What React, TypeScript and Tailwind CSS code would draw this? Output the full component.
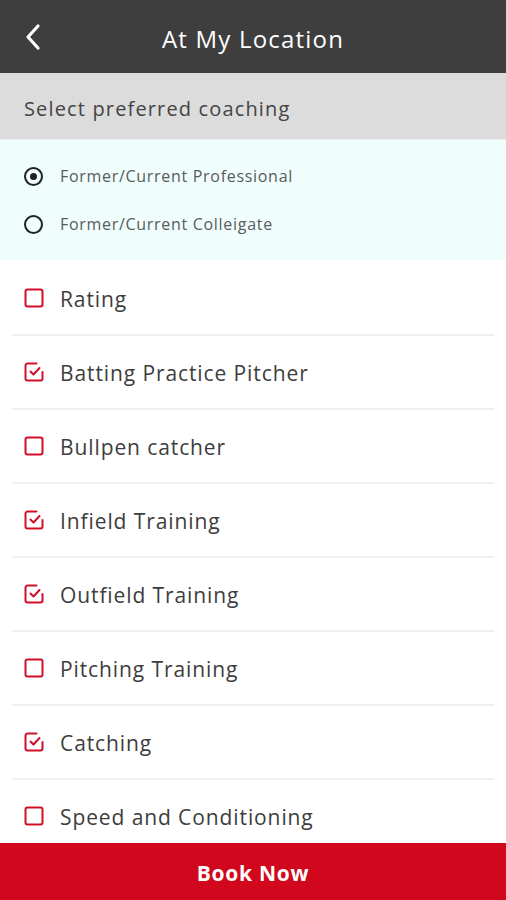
import { useState } from 'react';

const items = [
  { label: 'Rating', checked: false },
  { label: 'Batting Practice Pitcher', checked: true },
  { label: 'Bullpen catcher', checked: false },
  { label: 'Infield Training', checked: true },
  { label: 'Outfield Training', checked: true },
  { label: 'Pitching Training', checked: false },
  { label: 'Catching', checked: true },
  { label: 'Speed and Conditioning', checked: false },
];

function CheckIcon({ checked }: { checked: boolean }) {
  if (!checked) {
    return (
      <svg width="20" height="20" viewBox="0 0 20 20" className="shrink-0">
        <rect x="1.5" y="1.5" width="17" height="17" rx="2" fill="none" stroke="#d0102a" strokeWidth="2" />
      </svg>
    );
  }
  return (
    <svg width="20" height="20" viewBox="0 0 20 20" className="shrink-0">
      <path d="M18.5 10v6.5a2 2 0 0 1-2 2h-13a2 2 0 0 1-2-2v-13a2 2 0 0 1 2-2h9" fill="none" stroke="#d0102a" strokeWidth="2" strokeLinecap="round" />
      <path d="M6.5 9.5l3 3 6-6.5" fill="none" stroke="#d0102a" strokeWidth="2" strokeLinecap="round" strokeLinejoin="round" />
    </svg>
  );
}

export default function App() {
  const [coaching, setCoaching] = useState('pro');
  const [list, setList] = useState(items);

  return (
    <div className="w-[506px] h-[900px] flex flex-col bg-white overflow-hidden" style={{ fontFamily: '"Open Sans", Lato, sans-serif' }}>
      {/* header */}
      <div className="h-[73px] shrink-0 bg-[#3f3e3e] flex items-center relative">
        <svg width="22" height="30" viewBox="0 0 22 30" className="absolute left-[22px] top-[22px]">
          <path d="M16 4L6 15l10 11" fill="none" stroke="white" strokeWidth="3.2" strokeLinecap="round" strokeLinejoin="round" />
        </svg>
        <h1 className="w-full text-center text-white text-[24px] font-medium tracking-[1.2px] pt-1">At My Location</h1>
      </div>

      <div className="h-[67px] shrink-0 bg-[#dcdcdc] flex items-center px-6 pt-[5px] text-[20px] text-[#444] tracking-[1.15px] border-b border-[#e6eeee]">
        Select preferred coaching
      </div>

      <div className="h-[120px] shrink-0 bg-[#effdfd] flex flex-col justify-center gap-[30px] pl-6">
        {[
          { id: 'pro', label: 'Former/Current Professional' },
          { id: 'col', label: 'Former/Current Colleigate' },
        ].map((r) => (
          <button key={r.id} onClick={() => setCoaching(r.id)} className="flex items-center gap-[17px] h-[18px]">
            <span className="w-[19px] h-[19px] rounded-full border-2 border-[#222] flex items-center justify-center">
              {coaching === r.id && <span className="w-[7px] h-[7px] rounded-full bg-[#222]" />}
            </span>
            <span className="text-[16px] text-[#5a5a5a] tracking-[0.7px]">{r.label}</span>
          </button>
        ))}
      </div>

      <div className="flex-1 overflow-hidden px-3 pt-[2px]">
        {list.map((it, i) => (
          <button
            key={it.label}
            onClick={() => setList(list.map((x, j) => (j === i ? { ...x, checked: !x.checked } : x)))}
            className="w-full h-[74px] flex items-center gap-[16px] pl-[12px] border-b-2 border-[#f0f0f0] text-left"
          >
            <CheckIcon checked={it.checked} />
            <span className="text-[21px] text-[#3d3d3d] tracking-[0.9px] pt-[3px]">{it.label}</span>
          </button>
        ))}
      </div>

      <button className="h-[57px] shrink-0 bg-[#d1081d] text-white text-[21px] font-bold tracking-[0.75px] pt-[5px]">Book Now</button>
    </div>
  );
}
